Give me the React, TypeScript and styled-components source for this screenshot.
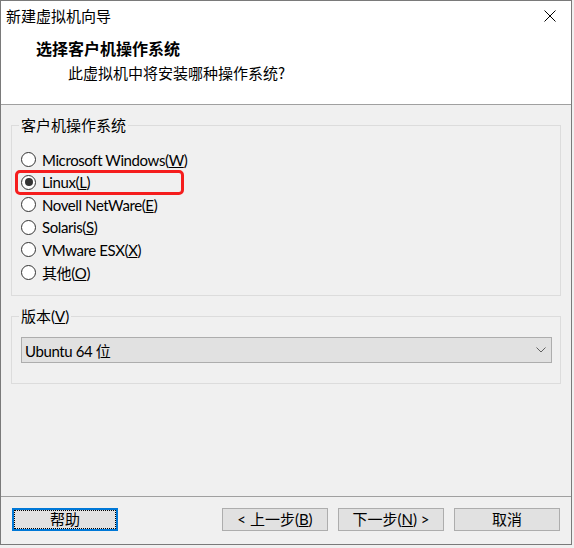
import React from 'react';
import styled, { createGlobalStyle } from 'styled-components';

const GlobalStyle = createGlobalStyle`
  html, body {
    margin: 0;
    padding: 0;
    background: #f0f0f0;
  }
  body {
    font-family: Lato, 'Noto Sans CJK SC', sans-serif;
    color: #000;
  }
`;

const Window = styled.div`
  width: 572px;
  height: 545px;
  box-sizing: border-box;
  border: 1px solid #7a7a7a;
  background: #f0f0f0;
  display: flex;
  flex-direction: column;
`;

const Header = styled.div`
  background: #fff;
  height: 104px;
  box-sizing: border-box;
  border-bottom: 1px solid #a0a0a0;
  display: flex;
  flex-direction: column;
`;

const TitleBar = styled.div`
  height: 30px;
  display: flex;
  align-items: center;
  justify-content: space-between;
  padding: 0 14px 0 5px;
`;

const WindowTitle = styled.span`
  font-size: 15px;
  line-height: 20px;
  font-family: 'Noto Sans CJK SC', sans-serif;
`;

const CloseButton = styled.button`
  border: 0;
  background: transparent;
  padding: 0;
  width: 14px;
  height: 14px;
  display: flex;
  align-items: center;
  justify-content: center;
`;

const HeaderText = styled.div`
  padding: 6px 0 0 35px;
  display: flex;
  flex-direction: column;
`;

const PageTitle = styled.div`
  font-family: 'Noto Sans CJK SC', sans-serif;
  font-weight: 700;
  font-size: 16px;
  line-height: 22px;
`;

const PageSubtitle = styled.div`
  font-family: 'Noto Sans CJK SC', sans-serif;
  font-size: 15px;
  line-height: 22px;
  margin-top: 3px;
  padding-left: 32px;
`;

const Body = styled.div`
  flex: 1;
  padding: 20px 10px 0 10px;
  display: flex;
  flex-direction: column;
  gap: 20px;
`;

const GroupBox = styled.div<{ $height: number }>`
  border: 1px solid #dcdcdc;
  height: ${p => p.$height}px;
  box-sizing: border-box;
  display: flex;
  flex-direction: column;
`;

const GroupLabel = styled.span`
  align-self: flex-start;
  margin: -11px 0 0 7px;
  padding: 0 2px;
  background: #f0f0f0;
  font-size: 15px;
  line-height: 20px;
`;

const RadioList = styled.div`
  padding: 13.5px 0 0 9px;
  display: flex;
  flex-direction: column;
`;

const RadioRow = styled.label<{ $highlight?: boolean }>`
  position: relative;
  height: 22.5px;
  display: flex;
  align-items: center;
  gap: 6px;
  font-size: 15px;
  letter-spacing: -0.4px;
  ${p =>
    p.$highlight &&
    `
    &::after {
      content: '';
      position: absolute;
      left: -6px;
      top: -1px;
      width: 169px;
      height: 24.5px;
      box-sizing: border-box;
      border: 3px solid #f51d1d;
      border-radius: 5px;
    }
  `}
`;

const RadioCircle = styled.span<{ $checked?: boolean }>`
  width: 15px;
  height: 15px;
  box-sizing: border-box;
  border: 1px solid #333;
  border-radius: 50%;
  background: #fff;
  display: flex;
  align-items: center;
  justify-content: center;
  flex-shrink: 0;
  &::before {
    content: '';
    width: 8px;
    height: 8px;
    border-radius: 50%;
    background: ${p => (p.$checked ? '#333' : 'transparent')};
  }
`;

const ComboWrap = styled.div`
  padding: 11px 8px 0 9px;
`;

const Combo = styled.div`
  height: 26px;
  box-sizing: border-box;
  border: 1px solid #adadad;
  background: #e1e1e1;
  display: flex;
  align-items: center;
  justify-content: space-between;
  padding: 0 5px 0 3px;
  font-size: 15px;
  letter-spacing: -0.4px;
`;

const Footer = styled.div`
  height: 48px;
  box-sizing: border-box;
  border-top: 1px solid #a0a0a0;
  padding: 11px 11px 0 11px;
  display: flex;
  align-items: flex-start;
  gap: 10px;
`;

const DialogButton = styled.button<{ $focused?: boolean; $push?: boolean }>`
  width: 106px;
  height: 23px;
  box-sizing: border-box;
  background: #e1e1e1;
  border: ${p => (p.$focused ? '2px solid #0078d7' : '1px solid #adadad')};
  outline: ${p => (p.$focused ? '1px dotted #000' : 'none')};
  outline-offset: -3px;
  padding: 0;
  font-family: Lato, 'Noto Sans CJK SC', sans-serif;
  font-size: 15px;
  line-height: 19px;
  color: #000;
  margin-right: ${p => (p.$push ? 'auto' : '0')};
`;

const osOptions = [
  { label: 'Microsoft Windows', key: 'W' },
  { label: 'Linux', key: 'L', checked: true },
  { label: 'Novell NetWare', key: 'E' },
  { label: 'Solaris', key: 'S' },
  { label: 'VMware ESX', key: 'X' },
  { label: '其他', key: 'O' },
];

export default function App() {
  return (
    <>
      <GlobalStyle />
      <Window>
        <Header>
          <TitleBar>
            <WindowTitle>新建虚拟机向导</WindowTitle>
            <CloseButton aria-label="关闭">
              <svg width="12" height="12" viewBox="0 0 12 12">
                <path d="M0.5 0.5 L11.5 11.5 M11.5 0.5 L0.5 11.5" stroke="#000" strokeWidth="1" />
              </svg>
            </CloseButton>
          </TitleBar>
          <HeaderText>
            <PageTitle>选择客户机操作系统</PageTitle>
            <PageSubtitle>此虚拟机中将安装哪种操作系统?</PageSubtitle>
          </HeaderText>
        </Header>

        <Body>
          <GroupBox $height={171}>
            <GroupLabel>客户机操作系统</GroupLabel>
            <RadioList>
              {osOptions.map(o => (
                <RadioRow key={o.key} $highlight={o.checked}>
                  <RadioCircle $checked={o.checked} />
                  <span>
                    {o.label}(<u>{o.key}</u>)
                  </span>
                </RadioRow>
              ))}
            </RadioList>
          </GroupBox>

          <GroupBox $height={68}>
            <GroupLabel>
              版本(<u>V</u>)
            </GroupLabel>
            <ComboWrap>
              <Combo>
                <span>Ubuntu 64 位</span>
                <svg width="10" height="6" viewBox="0 0 10 6">
                  <path d="M0.5 0.5 L5 5 L9.5 0.5" fill="none" stroke="#606060" strokeWidth="1" />
                </svg>
              </Combo>
            </ComboWrap>
          </GroupBox>
        </Body>

        <Footer>
          <DialogButton $focused $push>帮助</DialogButton>
          <DialogButton>
            &lt; 上一步(<u>B</u>)
          </DialogButton>
          <DialogButton>
            下一步(<u>N</u>) &gt;
          </DialogButton>
          <DialogButton>取消</DialogButton>
        </Footer>
      </Window>
    </>
  );
}
